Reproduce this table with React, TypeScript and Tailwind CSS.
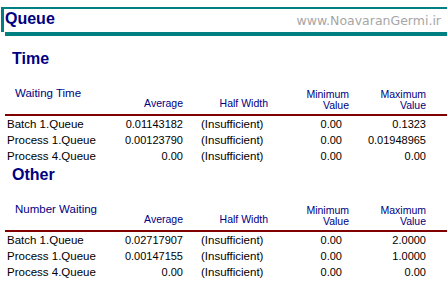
import React from "react";

type RowData = { name: string; avg: string; hw: string; min: string; max: string };

const font = { fontFamily: '"Liberation Sans", Arial, sans-serif' };

function Section({ title, label, rows, className }: { title: string; label: string; rows: RowData[]; className?: string }) {
  return (
    <section className={className}>
      <h2 className="pl-[12px] text-[16px] leading-[18px] h-[18px] font-bold text-[#000080]">{title}</h2>
      <div className="flex h-[46px] items-end text-[#000080]">
        <div className="w-[100px] shrink-0 pl-[15px] mb-[14px] text-[11.5px] leading-[13px] whitespace-nowrap">{label}</div>
        <div className="w-[83px] shrink-0 text-right mb-[5px] text-[10.5px] leading-[11px]">Average</div>
        <div className="w-[87px] shrink-0 text-right pr-[2px] mb-[5px] text-[10.5px] leading-[11px] whitespace-nowrap">Half Width</div>
        <div className="w-[80px] shrink-0 text-right pr-[1px] mb-[3px] text-[10.5px] leading-[11px]">
          <div>Minimum</div>
          <div>Value</div>
        </div>
        <div className="w-[76px] shrink-0 text-right mb-[3px] text-[10.5px] leading-[11px]">
          <div>Maximum</div>
          <div>Value</div>
        </div>
      </div>
      <div className="ml-[5px] h-[2px] bg-[#800000]" />
      {rows.map((r) => (
        <div key={r.name} className="flex h-[16px] text-[11px] leading-[16px] text-black whitespace-nowrap">
          <div className="w-[100px] shrink-0 pl-[7px] text-[11.5px]">{r.name}</div>
          <div className="w-[83px] shrink-0 text-right">{r.avg}</div>
          <div className="w-[87px] shrink-0 pl-[18px] text-[11.5px]">{r.hw}</div>
          <div className="w-[80px] shrink-0 text-right pr-[8px]">{r.min}</div>
          <div className="w-[76px] shrink-0 text-right">{r.max}</div>
        </div>
      ))}
    </section>
  );
}

export default function App() {
  const time: RowData[] = [
    { name: "Batch 1.Queue", avg: "0.01143182", hw: "(Insufficient)", min: "0.00", max: "0.1323" },
    { name: "Process 1.Queue", avg: "0.00123790", hw: "(Insufficient)", min: "0.00", max: "0.01948965" },
    { name: "Process 4.Queue", avg: "0.00", hw: "(Insufficient)", min: "0.00", max: "0.00" },
  ];
  const other: RowData[] = [
    { name: "Batch 1.Queue", avg: "0.02717907", hw: "(Insufficient)", min: "0.00", max: "2.0000" },
    { name: "Process 1.Queue", avg: "0.00147155", hw: "(Insufficient)", min: "0.00", max: "1.0000" },
    { name: "Process 4.Queue", avg: "0.00", hw: "(Insufficient)", min: "0.00", max: "0.00" },
  ];
  return (
    <div className="w-[447px] h-[287px] overflow-hidden bg-white pt-[7px]" style={font}>
      <div className="ml-[1px] h-[25px] border-t-2 border-l-[3px] border-[#008080] shadow-[4px_4px_0_#008080] flex justify-between items-start">
        <div className="pl-[1px] text-[16px] leading-[19px] font-bold text-[#000080]">Queue</div>
        <div
          className="pr-[6px] pt-[2px] text-[12.5px] leading-[19px] text-[#a6a6a6]"
          style={{ fontFamily: '"DejaVu Sans", Verdana, sans-serif' }}
        >
          www.NoavaranGermi.ir
        </div>
      </div>
      <Section className="mt-[18px]" title="Time" label="Waiting Time" rows={time} />
      <Section className="mt-[2px]" title="Other" label="Number Waiting" rows={other} />
    </div>
  );
}
